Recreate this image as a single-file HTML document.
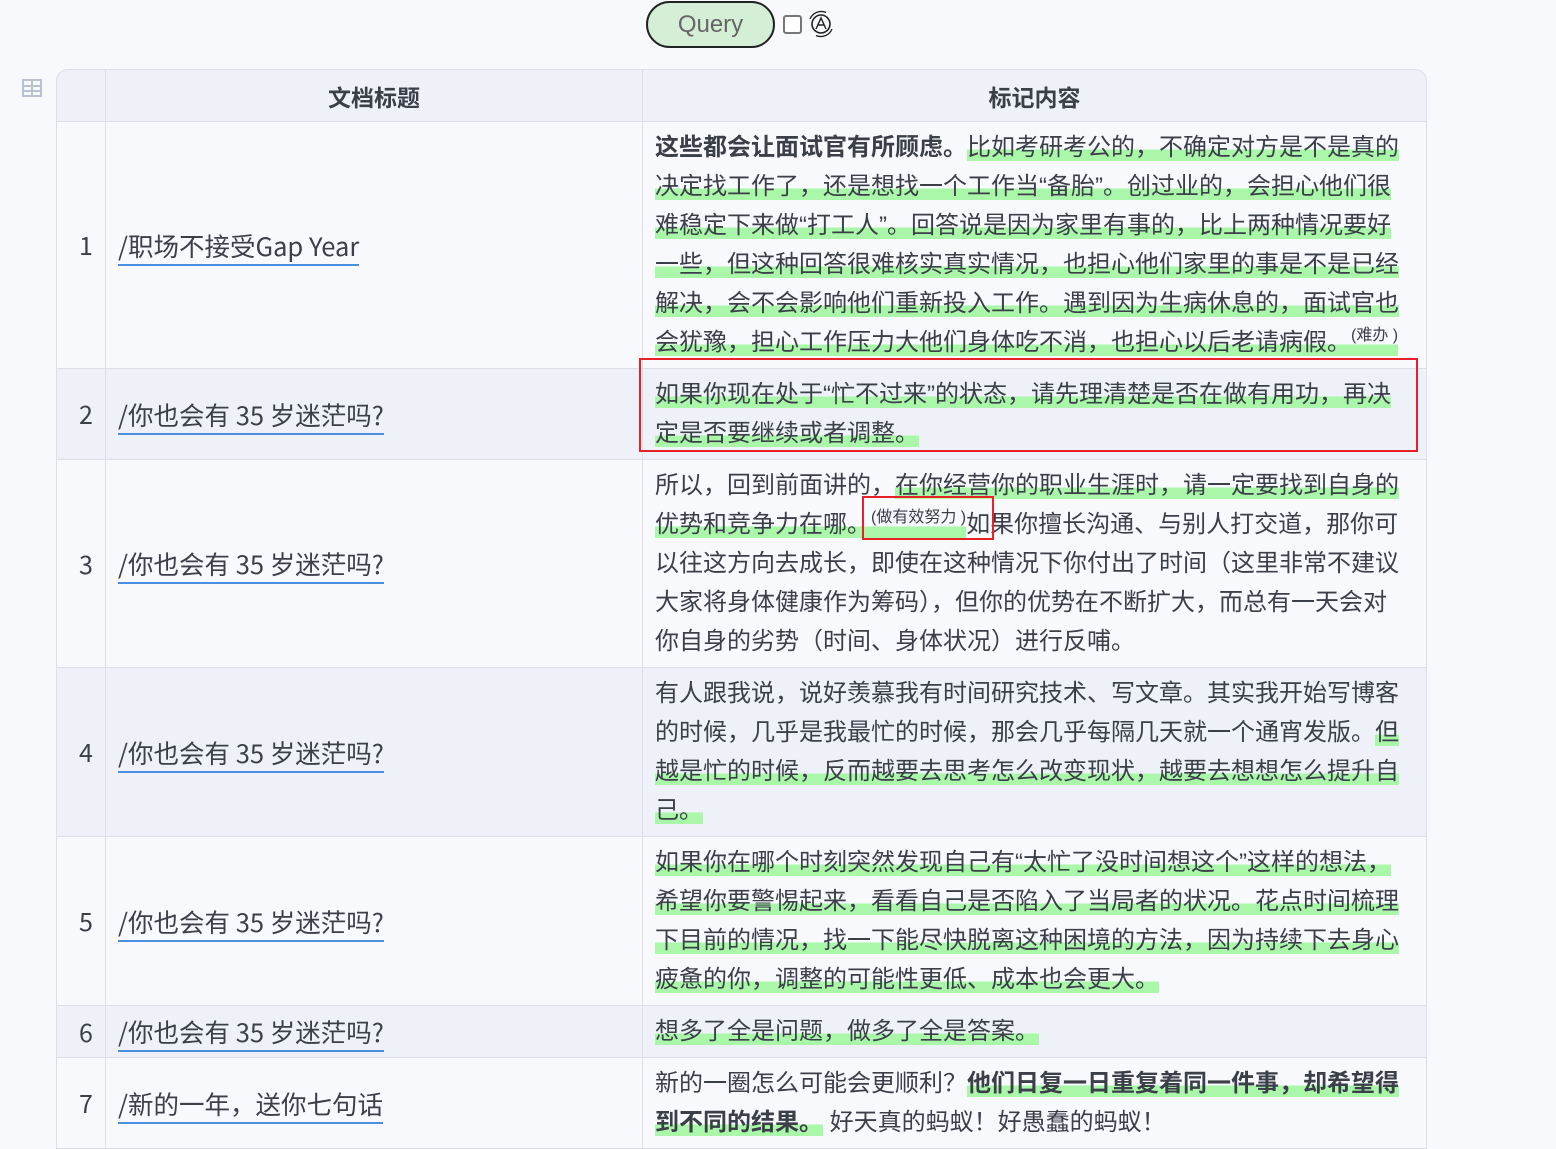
<!DOCTYPE html>
<html><head><meta charset="utf-8"><style>
body{margin:0;background:#f8f9fd;font-family:"Liberation Sans","Noto Sans CJK SC",sans-serif;color:#3a3f48;width:1556px;height:1137px;overflow:hidden;position:relative}
.q{position:absolute;left:646px;top:1px;width:125px;height:43px;border:2px solid #222;border-radius:24px;background:#d5efd6;color:#666;font-size:24px;text-align:center;line-height:43px;box-sizing:content-box}
.cb{position:absolute;left:783px;top:15px;width:15px;height:15px;border:2px solid #777;border-radius:3px;background:#fff}
.ic{position:absolute;left:806px;top:9px}
.tico{position:absolute;left:22px;top:79px}
table{position:absolute;left:56px;top:69px;border-collapse:separate;border-spacing:0;width:1371px;font-size:24px;table-layout:fixed}
td,th{border-right:1px solid #dcdfe6;border-bottom:1px solid #dcdfe6;padding:0;vertical-align:middle;overflow:hidden}
th{background:#eef1f8;height:51px;font-weight:bold;border-top:1px solid #dcdfe6;font-size:23px;font-family:"Noto Sans CJK SC",sans-serif}
tr>*:first-child{border-left:1px solid #dcdfe6}
th:first-child{border-top-left-radius:12px}
th:last-child{border-top-right-radius:12px}
tr.e td{background:#eef1f8}
.n{text-align:center;font-family:"Noto Sans CJK SC",sans-serif;padding-left:10px;font-size:25px}
.t{padding-left:12px;font-family:"Noto Sans CJK SC",sans-serif;font-size:25.5px}
.t span{border-bottom:2px solid #4a8fe0;padding-bottom:0}
.c{padding:6px 12px;line-height:39px;position:relative}
.h{background:linear-gradient(transparent 58%,#aaf7aa 58%)}
.a{font-size:16px;line-height:0;position:relative;top:-10px}
.red{position:absolute;border:2px solid #e8202a}
</style></head><body>
<div class="q">Query</div><div class="cb"></div>
<svg class="ic" width="30" height="30" viewBox="0 0 30 30"><circle cx="15" cy="15" r="9" fill="none" stroke="#222" stroke-width="1.6"/><path d="M4 10A12 12 0 0 1 20 3.5M26 20A12 12 0 0 1 10 26.5" fill="none" stroke="#222" stroke-width="1.3"/><path d="M10 20L15 9L20 20M12 16h6" fill="none" stroke="#222" stroke-width="1.4"/></svg>
<svg class="tico" width="20" height="18"><rect x="1" y="1" width="18" height="16" fill="none" stroke="#b8c2d0" stroke-width="2"/><path d="M1 7h18M1 12h18M10 1v16" stroke="#b8c2d0" stroke-width="2"/></svg>
<table>
<colgroup><col style="width:50px"><col style="width:537px"><col style="width:784px"></colgroup>
<tr><th></th><th>文档标题</th><th>标记内容</th></tr>
<tr style="height:247px"><td class="n">1</td><td class="t"><span>/职场不接受Gap Year</span></td><td class="c"><b>这些都会让面试官有所顾虑。</b><span class="h">比如考研考公的，不确定对方是不是真的<br>决定找工作了，还是想找一个工作当“备胎”。创过业的，会担心他们很<br>难稳定下来做“打工人”。回答说是因为家里有事的，比上两种情况要好<br>一些，但这种回答很难核实真实情况，也担心他们家里的事是不是已经<br>解决，会不会影响他们重新投入工作。遇到因为生病休息的，面试官也<br>会犹豫，担心工作压力大他们身体吃不消，也担心以后老请病假。<span class="a">(难办 )</span></span></td></tr>
<tr class="e" style="height:91px"><td class="n">2</td><td class="t"><span>/你也会有 35 岁迷茫吗?</span></td><td class="c"><span class="h">如果你现在处于“忙不过来”的状态，请先理清楚是否在做有用功，再决<br>定是否要继续或者调整。</span></td></tr>
<tr style="height:208px"><td class="n">3</td><td class="t"><span>/你也会有 35 岁迷茫吗?</span></td><td class="c">所以，回到前面讲的，<span class="h">在你经营你的职业生涯时，请一定要找到自身的<br>优势和竞争力在哪。</span><span class="h"><span class="a">(做有效努力 )</span></span>如果你擅长沟通、与别人打交道，那你可<br>以往这方向去成长，即使在这种情况下你付出了时间（这里非常不建议<br>大家将身体健康作为筹码），但你的优势在不断扩大，而总有一天会对<br>你自身的劣势（时间、身体状况）进行反哺。</td></tr>
<tr class="e" style="height:169px"><td class="n">4</td><td class="t"><span>/你也会有 35 岁迷茫吗?</span></td><td class="c">有人跟我说，说好羡慕我有时间研究技术、写文章。其实我开始写博客<br>的时候，几乎是我最忙的时候，那会几乎每隔几天就一个通宵发版。<span class="h">但<br>越是忙的时候，反而越要去思考怎么改变现状，越要去想想怎么提升自<br>己。</span></td></tr>
<tr style="height:169px"><td class="n">5</td><td class="t"><span>/你也会有 35 岁迷茫吗?</span></td><td class="c"><span class="h">如果你在哪个时刻突然发现自己有“太忙了没时间想这个”这样的想法，<br>希望你要警惕起来，看看自己是否陷入了当局者的状况。花点时间梳理<br>下目前的情况，找一下能尽快脱离这种困境的方法，因为持续下去身心<br>疲惫的你，调整的可能性更低、成本也会更大。</span></td></tr>
<tr class="e" style="height:52px"><td class="n">6</td><td class="t"><span>/你也会有 35 岁迷茫吗?</span></td><td class="c"><span class="h">想多了全是问题，做多了全是答案。</span></td></tr>
<tr style="height:91px"><td class="n">7</td><td class="t"><span>/新的一年，送你七句话</span></td><td class="c">新的一圈怎么可能会更顺利？<b class="h">他们日复一日重复着同一件事，却希望得<br>到不同的结果。</b> 好天真的蚂蚁！好愚蠢的蚂蚁！</td></tr>
</table>
<div class="red" style="left:639px;top:358px;width:775px;height:90px"></div>
<div class="red" style="left:862px;top:496px;width:128px;height:40px"></div>
</body></html>
